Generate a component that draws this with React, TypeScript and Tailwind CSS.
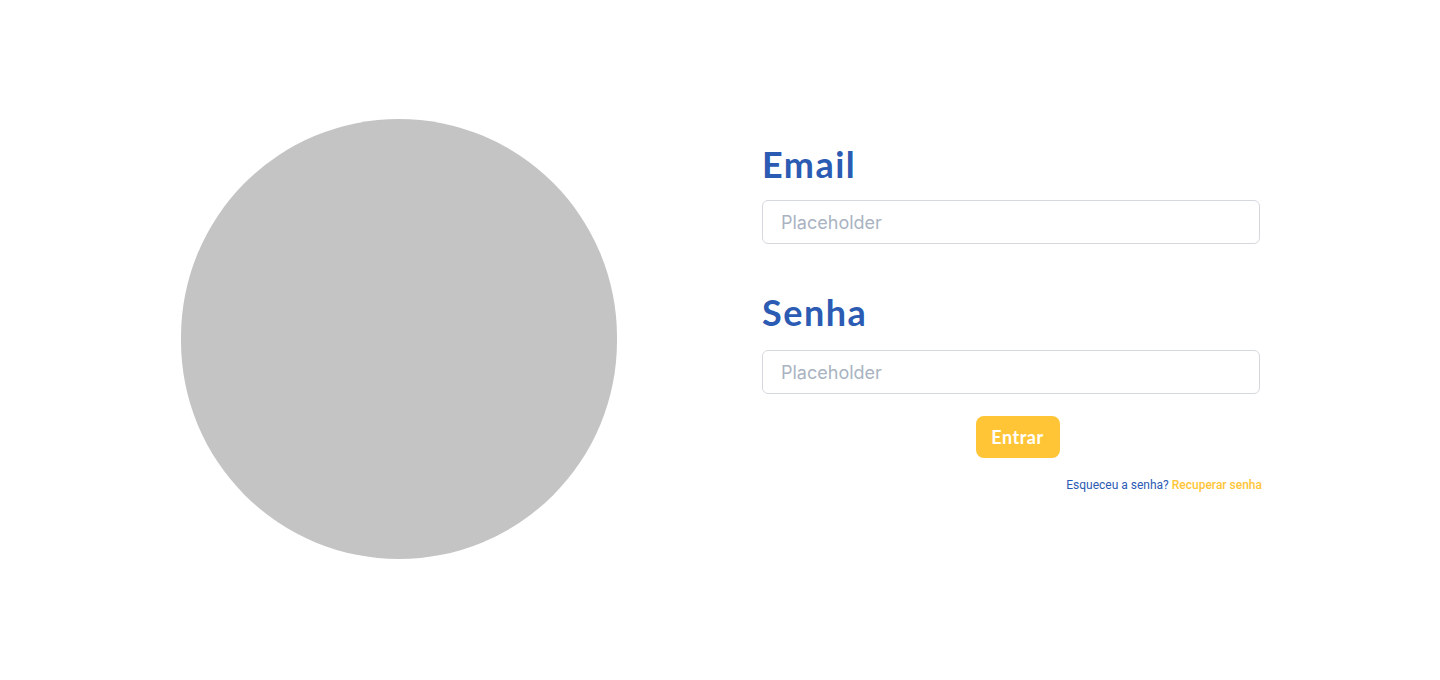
import React from 'react';

const Field: React.FC<{ label: string; type?: string; className?: string; inputClass?: string }> = ({
  label,
  type = 'text',
  className = '',
  inputClass = 'mt-[14px]',
}) => (
  <div className={className}>
    <label className="block text-[36px] leading-[44px] font-bold tracking-[1.5px] text-[#2b5bb3] font-['Lato','Open_Sans',sans-serif]">
      {label}
    </label>
    <input
      type={type}
      placeholder="Placeholder"
      className={`${inputClass} block w-[498px] h-[44px] px-[18px] rounded-md border border-[#d5d9df] bg-white text-lg text-gray-700 placeholder:text-[#a9b3c1] outline-none font-['Inter',sans-serif]`}
    />
  </div>
);

export default function App() {
  return (
    <div className="h-[680px] w-full bg-white flex items-start">
      <div className="ml-[181px] mt-[119px] w-[436px] h-[440px] rounded-full bg-[#c4c4c4] shrink-0" />

      <div className="ml-[145px] mt-[142px] w-[498px] flex flex-col">
        <Field label="Email" type="email" />
        <Field label="Senha" type="password" className="mt-[46px]" inputClass="mt-[16px]" />

        <button className="self-center ml-[13px] mt-[22px] w-[84px] h-[42px] rounded-lg bg-[#ffc536] text-white text-lg font-bold tracking-[0.5px] font-['Lato','Open_Sans',sans-serif]">
          Entrar
        </button>

        <p className="mt-[18px] -mr-[2px] self-end text-[12px] font-['Roboto',sans-serif]">
          <span className="text-[#2b5bb3]">Esqueceu a senha? </span>
          <a href="#" className="text-[#ffc536] font-medium">Recuperar senha</a>
        </p>
      </div>
    </div>
  );
}
